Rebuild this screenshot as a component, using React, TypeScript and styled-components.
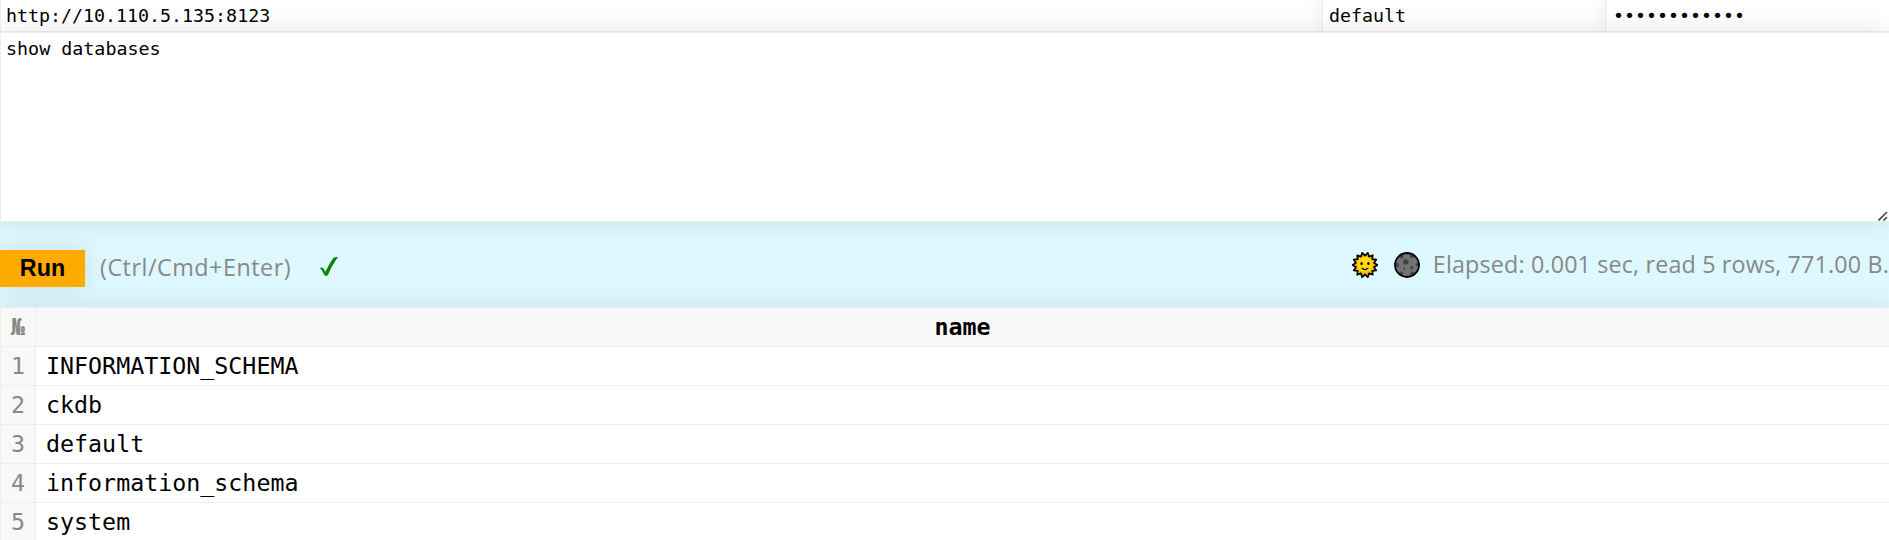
import { useState } from 'react';
import styled, { createGlobalStyle } from 'styled-components';

const GlobalStyle = createGlobalStyle`
  * {
    box-sizing: border-box;
  }

  html,
  body {
    margin: 0;
    height: 540px;
    overflow: hidden;
    background: #ddf8ff;
    color: #000;
    font-family: 'Open Sans', sans-serif;
  }
`;

const Page = styled.div`
  width: 1889px;
  height: 540px;
  overflow: hidden;
`;

const Inputs = styled.div`
  display: grid;
  grid-template-columns: 1322px 284px 1fr;
  height: 32px;
`;

const Field = styled.input`
  position: relative;
  height: 32px;
  min-width: 0;
  padding: 0 5px 0 6px;
  border: 1px solid #eee;
  border-top: 0;
  border-right: 0;
  border-radius: 0;
  outline: none;
  background: #fff;
  color: #000;
  box-shadow: 0 0 23px rgba(0, 0, 0, 0.1);
  font: 18.3px 'DejaVu Sans Mono', monospace;

  &:first-child {
    padding-left: 5px;
  }
`;

const QueryBox = styled.div`
  position: relative;
  height: 190px;
`;

const Query = styled.textarea`
  display: block;
  width: 100%;
  height: 190px;
  padding: 5px;
  border: 1px solid #eee;
  border-right: 0;
  border-radius: 0;
  outline: none;
  resize: none;
  background: #fff;
  color: #000;
  box-shadow: 0 0 23px rgba(0, 0, 0, 0.1);
  font: 18.35px/21px 'DejaVu Sans Mono', monospace;
`;

const Grip = styled.svg`
  position: absolute;
  right: 1px;
  bottom: 1px;
  cursor: ns-resize;
`;

const Controls = styled.div`
  display: flex;
  align-items: flex-start;
  height: 85px;
  padding-top: 28px;
`;

const RunButton = styled.button`
  width: 85px;
  height: 37px;
  padding: 0 0 1px;
  border: 0;
  background: #fa0;
  color: #000;
  box-shadow: 0 0 23px rgba(0, 0, 0, 0.1);
  font: bold 23.3px/34px 'Liberation Sans', sans-serif;
`;

const Hint = styled.span`
  width: 219px;
  margin-left: 15px;
  color: #888;
  font-size: 23.3px;
  line-height: 35px;
  letter-spacing: 0.53px;
  white-space: nowrap;
`;

const CheckIcon = styled.svg`
  margin-top: 7px;
  fill: #080;
`;

const Status = styled.div`
  display: flex;
  align-items: center;
  gap: 16px;
  margin-left: auto;
  height: 30px;
`;

const Stats = styled.span`
  margin-left: -3px;
  color: #888;
  font-size: 23.3px;
  line-height: 30px;
  padding-bottom: 2px;
  letter-spacing: 0.16px;
  white-space: nowrap;
`;

const Result = styled.table`
  position: relative;
  width: 1890px;
  border-collapse: collapse;
  background: #fff;
  box-shadow: 0 0 23px rgba(0, 0, 0, 0.1);
  font: 23.3px/27px 'DejaVu Sans Mono', monospace;
`;

const Row = styled.tr`
  height: 39px;
`;

const Head = styled.th`
  padding: 0 0 2px;
  border: 1px solid #eee;
  background: #f8f8f8;
  font-weight: bold;
`;

const NumberHead = styled(Head)`
  width: 35px;
  color: #888;
`;

const RowNumber = styled.td`
  padding: 0 0 2px;
  border: 1px solid #eee;
  background: #f8f8f8;
  color: #888;
  text-align: center;
`;

const Cell = styled.td`
  padding: 0 10px 2px;
  border: 1px solid #eee;
`;

const databases = ['INFORMATION_SCHEMA', 'ckdb', 'default', 'information_schema', 'system'];

function sunPoints() {
  const points: string[] = [];
  for (let i = 0; i < 28; i++) {
    const radius = i % 2 === 0 ? 12.5 : 9.3;
    const angle = ((i + 1) * Math.PI) / 14;
    points.push(`${13 + radius * Math.sin(angle)},${13 - radius * Math.cos(angle)}`);
  }
  return points.join(' ');
}

function Sun() {
  return (
    <svg width="26" height="26" viewBox="0 0 26 26">
      <polygon points={sunPoints()} fill="#f9b80a" stroke="#000" strokeWidth="1.7" strokeLinejoin="round" />
      <circle cx="13" cy="12.6" r="7.8" fill="#ffd80d" />
      <ellipse cx="9.6" cy="11.4" rx="1.2" ry="1.5" />
      <ellipse cx="16.4" cy="11.4" rx="1.2" ry="1.5" />
      <path d="M10 16.3Q13 18.8 16 16.3" fill="none" stroke="#000" strokeWidth="1.2" strokeLinecap="round" />
    </svg>
  );
}

function Moon() {
  return (
    <svg width="26" height="26" viewBox="0 0 26 26">
      <circle cx="13" cy="13" r="12" fill="#737373" />
      <g fill="#444">
        <circle cx="11.7" cy="10" r="2.8" />
        <circle cx="17.8" cy="15.6" r="1.7" />
        <circle cx="10.2" cy="16.7" r="1.1" />
        <circle cx="3" cy="13" r="2.2" />
        <circle cx="7.5" cy="4.4" r="2" />
        <circle cx="18" cy="4" r="2.2" />
        <circle cx="23.2" cy="12.5" r="1.8" />
        <circle cx="18.5" cy="21.8" r="2.3" />
        <circle cx="7" cy="21.5" r="2" />
      </g>
      <circle cx="13" cy="13" r="12" fill="none" stroke="#000" strokeWidth="1.8" />
    </svg>
  );
}

function Check() {
  return (
    <CheckIcon width="20" height="20" viewBox="0 0 20 20">
      <path d="M1 11.4C2 10.3 3.4 10.1 4.2 11.3L6.5 14.8C9 9.5 11.4 5 14 1.5C15 .3 16.5 0 19 0C15 5.5 11.7 11.5 9.2 17.5C8.4 19.2 6.4 19.3 5.4 17.9C3.8 15 3 12.4 1 11.4Z" />
    </CheckIcon>
  );
}

export default function App() {
  const [url, setUrl] = useState('http://10.110.5.135:8123');
  const [user, setUser] = useState('default');
  const [password, setPassword] = useState('••••••••••••');
  const [query, setQuery] = useState('show databases');

  return (
    <Page>
      <GlobalStyle />
      <Inputs>
        <Field value={url} onChange={(e) => setUrl(e.target.value)} spellCheck={false} />
        <Field value={user} onChange={(e) => setUser(e.target.value)} spellCheck={false} />
        <Field type="password" value={password} onChange={(e) => setPassword(e.target.value)} />
      </Inputs>
      <QueryBox>
        <Query value={query} onChange={(e) => setQuery(e.target.value)} spellCheck={false} />
        <Grip width="10" height="10" viewBox="0 0 10 10" stroke="#444" strokeWidth="1.6">
          <path d="M0.5 9.5L9 1M5.5 9.5L9 6" fill="none" />
        </Grip>
      </QueryBox>
      <Controls>
        <RunButton>Run</RunButton>
        <Hint>(Ctrl/Cmd+Enter)</Hint>
        <Check />
        <Status>
          <Sun />
          <Moon />
          <Stats>Elapsed: 0.001 sec, read 5 rows, 771.00 B.</Stats>
        </Status>
      </Controls>
      <Result>
        <thead>
          <Row>
            <NumberHead>№</NumberHead>
            <Head>name</Head>
          </Row>
        </thead>
        <tbody>
          {databases.map((name, i) => (
            <Row key={name}>
              <RowNumber>{i + 1}</RowNumber>
              <Cell>{name}</Cell>
            </Row>
          ))}
        </tbody>
      </Result>
    </Page>
  );
}
